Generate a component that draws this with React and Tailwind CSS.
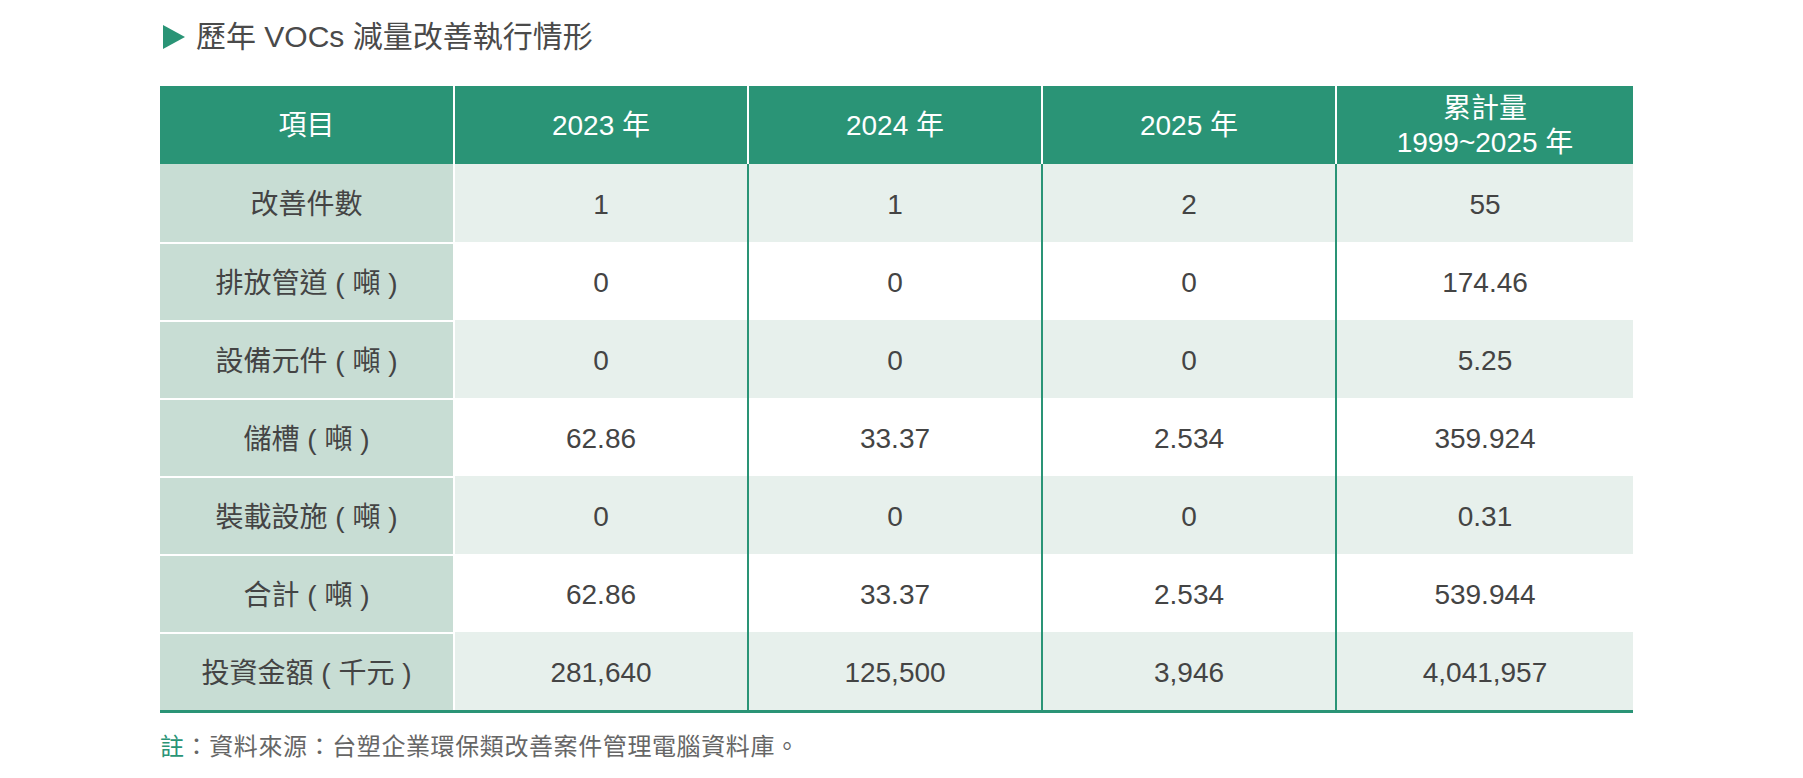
import React from 'react';

const rows = [
  { label: '改善件數', values: ['1', '1', '2', '55'] },
  { label: '排放管道 ( 噸 )', values: ['0', '0', '0', '174.46'] },
  { label: '設備元件 ( 噸 )', values: ['0', '0', '0', '5.25'] },
  { label: '儲槽 ( 噸 )', values: ['62.86', '33.37', '2.534', '359.924'] },
  { label: '裝載設施 ( 噸 )', values: ['0', '0', '0', '0.31'] },
  { label: '合計 ( 噸 )', values: ['62.86', '33.37', '2.534', '539.944'] },
  { label: '投資金額 ( 千元 )', values: ['281,640', '125,500', '3,946', '4,041,957'] },
];

const font = { fontFamily: '"Liberation Sans", "Noto Sans CJK TC", sans-serif' };

const App = () => {
  return (
    <div className="min-h-screen bg-white pl-[160px] pt-[20px]" style={font}>
      <div className="flex items-center h-[34px] mb-[32px]">
        <svg width="22" height="24" viewBox="0 0 22 24" className="ml-[3px] mr-[11px]">
          <polygon points="0,0 22,12 0,24" fill="#2a9476" />
        </svg>
        <h2 className="text-[30px] leading-[34px] text-[#4a4a4a]">歷年 VOCs 減量改善執行情形</h2>
      </div>

      <div className="w-[1473px] border-b-[3px] border-[#2a9476]">
        <div className="grid grid-cols-[293px_294px_294px_294px_1fr] bg-[#2a9476] text-white text-[28px] leading-[34px]">
          <div className="h-[78px] pt-[1px] flex items-center justify-center">項目</div>
          <div className="h-[78px] pt-[1px] flex items-center justify-center border-l-2 border-white">2023 年</div>
          <div className="h-[78px] pt-[1px] flex items-center justify-center border-l-2 border-white">2024 年</div>
          <div className="h-[78px] pt-[1px] flex items-center justify-center border-l-2 border-white">2025 年</div>
          <div className="h-[78px] pt-[1px] flex flex-col items-center justify-center border-l-2 border-white text-center">
            <span>累計量</span>
            <span>1999~2025 年</span>
          </div>
        </div>
        {rows.map((row, i) => (
          <div
            key={row.label}
            className={`grid grid-cols-[293px_294px_294px_294px_1fr] text-[28px] text-[#444] ${i % 2 === 0 ? 'bg-[#e7f0ec]' : 'bg-white'}`}
          >
            <div className={`h-[78px] pt-[3px] flex items-center justify-center bg-[#c8ddd4] ${i > 0 ? 'border-t-2 border-white' : ''}`}>
              {row.label}
            </div>
            {row.values.map((v, j) => (
              <div
                key={j}
                className={`h-[78px] pt-[3px] flex items-center justify-center border-l-2 ${j === 0 ? 'border-white' : 'border-[#2a9476]'}`}
              >
                {v}
              </div>
            ))}
          </div>
        ))}
      </div>

      <p className="mt-[22px] text-[24px] leading-[24px] tracking-[0.6px] text-[#666]">
        <span className="text-[#2a9476]">註</span>：資料來源：台塑企業環保類改善案件管理電腦資料庫。
      </p>
    </div>
  );
};

export default App;
